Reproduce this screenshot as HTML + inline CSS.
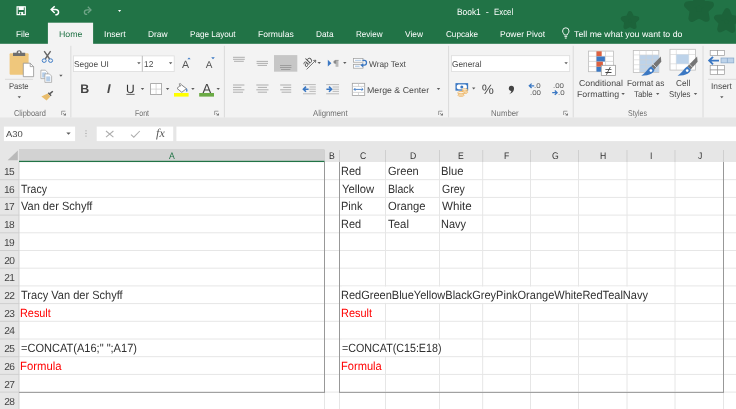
<!DOCTYPE html>
<html><head><meta charset="utf-8"><title>Book1 - Excel</title>
<style>
html,body{margin:0;padding:0;}
body{width:736px;height:409px;overflow:hidden;position:relative;background:#e6e6e6;font-family:'Liberation Sans',sans-serif;}
.t{position:absolute;white-space:pre;text-rendering:geometricPrecision;}
#top{position:absolute;left:0;top:0;width:736px;height:43px;background:#217346;}
#hometab{position:absolute;left:48.3px;top:23px;width:45px;height:22px;background:#f3f3f3;}
#ribbon{position:absolute;left:0;top:43px;width:736px;height:75px;background:#f3f3f3;}
#fbar{position:absolute;left:0;top:118px;width:736px;height:31px;background:#e6e6e6;}
.box{position:absolute;background:#fff;}
svg{position:absolute;left:0;top:0;}
#txt{position:absolute;left:0;top:0;width:736px;height:409px;will-change:transform;}
</style></head><body>
<div id="ribbon"></div><div id="top"></div><div id="fbar"></div>
<svg width="736" height="409" viewBox="0 0 736 409">
<rect x="0" y="162.0" width="736" height="247.0" fill="#fff"/>
<rect x="0" y="42" width="736" height="1.8" fill="#217346"/><rect x="47.9" y="22.7" width="45.2" height="21.6" fill="#f3f3f3"/>
<rect x="0" y="117.5" width="736" height="2" fill="#e6e6e6"/>
<rect x="3.9" y="126.6" width="71.2" height="14.5" fill="#fff"/>
<rect x="96.7" y="126.6" width="76.5" height="14.5" fill="#fff"/>
<rect x="176.4" y="126.6" width="560" height="14.5" fill="#fff"/>
<rect x="0" y="162.0" width="19" height="247.0" fill="#e6e6e6"/>
<line x1="19" x2="736" y1="179.70" y2="179.70" stroke="#e6e6e6" stroke-width="1"/>
<line x1="0" x2="19" y1="179.70" y2="179.70" stroke="#cfcfcf" stroke-width="1"/>
<line x1="19" x2="736" y1="197.40" y2="197.40" stroke="#e6e6e6" stroke-width="1"/>
<line x1="0" x2="19" y1="197.40" y2="197.40" stroke="#cfcfcf" stroke-width="1"/>
<line x1="19" x2="736" y1="215.10" y2="215.10" stroke="#e6e6e6" stroke-width="1"/>
<line x1="0" x2="19" y1="215.10" y2="215.10" stroke="#cfcfcf" stroke-width="1"/>
<line x1="19" x2="736" y1="232.80" y2="232.80" stroke="#e6e6e6" stroke-width="1"/>
<line x1="0" x2="19" y1="232.80" y2="232.80" stroke="#cfcfcf" stroke-width="1"/>
<line x1="19" x2="736" y1="250.50" y2="250.50" stroke="#e6e6e6" stroke-width="1"/>
<line x1="0" x2="19" y1="250.50" y2="250.50" stroke="#cfcfcf" stroke-width="1"/>
<line x1="19" x2="736" y1="268.20" y2="268.20" stroke="#e6e6e6" stroke-width="1"/>
<line x1="0" x2="19" y1="268.20" y2="268.20" stroke="#cfcfcf" stroke-width="1"/>
<line x1="19" x2="736" y1="285.90" y2="285.90" stroke="#e6e6e6" stroke-width="1"/>
<line x1="0" x2="19" y1="285.90" y2="285.90" stroke="#cfcfcf" stroke-width="1"/>
<line x1="19" x2="736" y1="303.60" y2="303.60" stroke="#e6e6e6" stroke-width="1"/>
<line x1="0" x2="19" y1="303.60" y2="303.60" stroke="#cfcfcf" stroke-width="1"/>
<line x1="19" x2="736" y1="321.30" y2="321.30" stroke="#e6e6e6" stroke-width="1"/>
<line x1="0" x2="19" y1="321.30" y2="321.30" stroke="#cfcfcf" stroke-width="1"/>
<line x1="19" x2="736" y1="339.00" y2="339.00" stroke="#e6e6e6" stroke-width="1"/>
<line x1="0" x2="19" y1="339.00" y2="339.00" stroke="#cfcfcf" stroke-width="1"/>
<line x1="19" x2="736" y1="356.70" y2="356.70" stroke="#e6e6e6" stroke-width="1"/>
<line x1="0" x2="19" y1="356.70" y2="356.70" stroke="#cfcfcf" stroke-width="1"/>
<line x1="19" x2="736" y1="374.40" y2="374.40" stroke="#e6e6e6" stroke-width="1"/>
<line x1="0" x2="19" y1="374.40" y2="374.40" stroke="#cfcfcf" stroke-width="1"/>
<line x1="19" x2="736" y1="392.10" y2="392.10" stroke="#e6e6e6" stroke-width="1"/>
<line x1="0" x2="19" y1="392.10" y2="392.10" stroke="#cfcfcf" stroke-width="1"/>
<line x1="19" x2="736" y1="409.80" y2="409.80" stroke="#e6e6e6" stroke-width="1"/>
<line x1="0" x2="19" y1="409.80" y2="409.80" stroke="#cfcfcf" stroke-width="1"/>
<line x1="324.5" x2="324.5" y1="162.0" y2="409" stroke="#e6e6e6" stroke-width="1"/>
<line x1="324.5" x2="324.5" y1="150" y2="162.0" stroke="#cfcfcf" stroke-width="1"/>
<line x1="339.5" x2="339.5" y1="162.0" y2="409" stroke="#e6e6e6" stroke-width="1"/>
<line x1="339.5" x2="339.5" y1="150" y2="162.0" stroke="#cfcfcf" stroke-width="1"/>
<line x1="385.5" x2="385.5" y1="162.0" y2="409" stroke="#e6e6e6" stroke-width="1"/>
<line x1="385.5" x2="385.5" y1="150" y2="162.0" stroke="#cfcfcf" stroke-width="1"/>
<line x1="439.5" x2="439.5" y1="162.0" y2="409" stroke="#e6e6e6" stroke-width="1"/>
<line x1="439.5" x2="439.5" y1="150" y2="162.0" stroke="#cfcfcf" stroke-width="1"/>
<line x1="482.7" x2="482.7" y1="162.0" y2="409" stroke="#e6e6e6" stroke-width="1"/>
<line x1="482.7" x2="482.7" y1="150" y2="162.0" stroke="#cfcfcf" stroke-width="1"/>
<line x1="530.5" x2="530.5" y1="162.0" y2="409" stroke="#e6e6e6" stroke-width="1"/>
<line x1="530.5" x2="530.5" y1="150" y2="162.0" stroke="#cfcfcf" stroke-width="1"/>
<line x1="578.5" x2="578.5" y1="162.0" y2="409" stroke="#e6e6e6" stroke-width="1"/>
<line x1="578.5" x2="578.5" y1="150" y2="162.0" stroke="#cfcfcf" stroke-width="1"/>
<line x1="627" x2="627" y1="162.0" y2="409" stroke="#e6e6e6" stroke-width="1"/>
<line x1="627" x2="627" y1="150" y2="162.0" stroke="#cfcfcf" stroke-width="1"/>
<line x1="675" x2="675" y1="162.0" y2="409" stroke="#e6e6e6" stroke-width="1"/>
<line x1="675" x2="675" y1="150" y2="162.0" stroke="#cfcfcf" stroke-width="1"/>
<line x1="723.5" x2="723.5" y1="162.0" y2="409" stroke="#e6e6e6" stroke-width="1"/>
<line x1="723.5" x2="723.5" y1="150" y2="162.0" stroke="#cfcfcf" stroke-width="1"/>
<rect x="342" y="286.60" width="332" height="16.30" fill="#fff"/>
<rect x="342" y="339.70" width="139.5" height="16.30" fill="#fff"/>
<line x1="19" x2="19" y1="162.0" y2="409" stroke="#cfcfcf" stroke-width="1"/>
<line x1="324.5" x2="324.5" y1="162.0" y2="392.40000000000003" stroke="#989898" stroke-width="1"/>
<line x1="19" x2="325" y1="392.40000000000003" y2="392.40000000000003" stroke="#989898" stroke-width="1"/>
<line x1="339.5" x2="339.5" y1="162.0" y2="392.40000000000003" stroke="#989898" stroke-width="1"/>
<line x1="723.5" x2="723.5" y1="162.0" y2="392.40000000000003" stroke="#989898" stroke-width="1"/>
<line x1="339" x2="724" y1="392.40000000000003" y2="392.40000000000003" stroke="#989898" stroke-width="1"/>
<rect x="19" y="149" width="305.5" height="12" fill="#d2d2d2"/>
<rect x="19" y="160.8" width="305.5" height="1.25" fill="#217346"/>
<polygon points="17.8,150.4 17.8,160.3 7.6,160.3" fill="#b9b9b9"/>
<!-- decorative clovers -->
<g fill="#1c633a" stroke="#1c633a" stroke-linejoin="round">
<polygon points="630.0,13.4 632.1,17.9 637.0,18.5 633.4,21.9 634.3,26.8 630.0,24.4 625.7,26.8 626.6,21.9 623.0,18.5 627.9,17.9" stroke-width="4.6"/>
<polygon points="699.0,-3.4 702.5,3.7 710.4,4.9 704.7,10.5 706.1,18.3 699.0,14.6 691.9,18.3 693.3,10.5 687.6,4.9 695.5,3.7" stroke-width="7"/>
<polygon points="727.1,11.2 729.7,17.5 736.5,18.8 731.3,23.2 732.2,30.0 726.3,26.4 720.2,29.3 721.8,22.7 717.1,17.7 723.9,17.2" stroke-width="6"/>
</g>
<!-- title bar icons -->
<g fill="none" stroke="#fff" stroke-width="1.2">
<rect x="17.1" y="6.8" width="8.2" height="7.8"/>
</g>
<rect x="18.6" y="6.8" width="5.2" height="3.2" fill="#fff"/>
<rect x="19.2" y="12" width="4" height="2.6" fill="#fff"/>
<rect x="20" y="12.6" width="1.2" height="2" fill="#217346"/>
<path d="M54.7,6.2 L51.2,9.6 L54.7,13" fill="none" stroke="#fff" stroke-width="1.5"/>
<path d="M51.5,9.6 H55.5 C59.6,9.6 59.6,14.8 55.3,14.8" fill="none" stroke="#fff" stroke-width="1.5"/>
<g opacity="0.35"><path d="M87.8,6.8 L91,9.9 L87.8,13" fill="none" stroke="#fff" stroke-width="1.3"/>
<path d="M90.6,9.9 H87.2 C83.4,9.9 83.4,14.4 87.2,14.4" fill="none" stroke="#fff" stroke-width="1.3"/></g>
<polygon points="118,10 121.2,10 119.6,11.9" fill="#fff"/>
<!-- light bulb -->
<g fill="none" stroke="#fff" stroke-width="0.9">
<path d="M564.3,35 C564.3,33.6 562.6,33 562.6,31 A3.2,3.2 0 0 1 569,31 C569,33 567.3,33.6 567.3,35 Z"/>
<line x1="564.4" x2="567.2" y1="36.6" y2="36.6"/><line x1="564.9" x2="566.7" y1="38.1" y2="38.1"/>
</g>

<!-- group separators -->
<g stroke="#dadada" stroke-width="1">
<line x1="70.9" x2="70.9" y1="45.8" y2="117.4"/><line x1="224.4" x2="224.4" y1="45.8" y2="117.4"/><line x1="448.6" x2="448.6" y1="45.8" y2="117.4"/><line x1="573.2" x2="573.2" y1="45.8" y2="117.4"/><line x1="703" x2="703" y1="45.8" y2="117.4"/>
<line x1="5" x2="33" y1="79.3" y2="79.3"/><line x1="708" x2="736" y1="79.3" y2="79.3"/>
</g>
<!-- dialog launchers -->
<g fill="none" stroke="#8a8a8a" stroke-width="0.8">
<path d="M61.6,115 V111.2 H65.4"/><path d="M214.6,115 V111.2 H218.4"/><path d="M438.6,115 V111.2 H442.4"/><path d="M563.6,115 V111.2 H567.4"/>
</g>
<g fill="#777">
<path d="M66,115.6 H63.4 L66,113 Z M63.3,112.9 l2,2 l-.5,.5 l-2,-2z"/>
<path d="M219,115.6 H216.4 L219,113 Z M216.3,112.9 l2,2 l-.5,.5 l-2,-2z"/>
<path d="M443,115.6 H440.4 L443,113 Z M440.3,112.9 l2,2 l-.5,.5 l-2,-2z"/>
<path d="M568,115.6 H565.4 L568,113 Z M565.3,112.9 l2,2 l-.5,.5 l-2,-2z"/>
</g>
<!-- font boxes -->
<rect x="73.4" y="55.9" width="100.8" height="15.7" fill="#fff" stroke="#dcdcdc" stroke-width="0.8"/>
<line x1="142.3" x2="142.3" y1="55.9" y2="71.6" stroke="#b5b5b5" stroke-width="0.9"/>
<rect x="451.4" y="55.7" width="118.3" height="15.7" fill="#fff" stroke="#dcdcdc" stroke-width="0.8"/>
<!-- carets -->
<g fill="#5c5c5c">
<polygon points="17.6,96.2 21.0,96.2 19.3,98.2"/>
<polygon points="59.2,74.8 62.6,74.8 60.9,76.8"/>
<polygon points="137.2,62.2 140.6,62.2 138.9,64.2"/>
<polygon points="168.9,62.2 172.3,62.2 170.6,64.2"/>
<polygon points="140.8,87.9 144.2,87.9 142.5,89.9"/>
<polygon points="165.9,87.9 169.3,87.9 167.6,89.9"/>
<polygon points="191.2,87.9 194.6,87.9 192.9,89.9"/>
<polygon points="216.5,87.9 219.9,87.9 218.2,89.9"/>
<polygon points="317.5,62.0 320.9,62.0 319.2,64.0"/>
<polygon points="343.1,62.0 346.5,62.0 344.8,64.0"/>
<polygon points="436.8,87.9 440.2,87.9 438.5,89.9"/>
<polygon points="564.4,62.2 567.8,62.2 566.1,64.2"/>
<polygon points="472.0,87.5 475.4,87.5 473.7,89.5"/>
<polygon points="621.4,92.9 624.8,92.9 623.1,94.9"/>
<polygon points="656.0,92.9 659.4,92.9 657.7,94.9"/>
<polygon points="693.8,92.9 697.2,92.9 695.5,94.9"/>
<polygon points="720.1,96.2 723.5,96.2 721.8,98.2"/>
<polygon points="66.3,132.4 70.7,132.4 68.5,134.8"/>
</g>
<!-- Paste icon -->
<rect x="9.6" y="53.2" width="19" height="21.6" rx="1" fill="#efc77c"/>
<path d="M13,55.9 V52.7 H16.6 V52.4 C16.6,49.4 21.7,49.4 21.7,52.4 V52.7 H25.2 V55.9 Z" fill="#6e6e6e"/>
<circle cx="19.15" cy="52.3" r="1" fill="#f3f3f3"/>
<path d="M23.3,63.2 H30.2 L33.6,66.6 V76.7 H23.3 Z" fill="#fff" stroke="#8f8f8f" stroke-width="0.75"/>
<path d="M30.2,63.2 V66.6 H33.6" fill="none" stroke="#8f8f8f" stroke-width="0.75"/>
<!-- scissors -->
<g fill="none">
<path d="M44.2,51.2 L49.6,59 M50.6,51.2 L45.2,59" stroke="#666" stroke-width="1.4"/>
<ellipse cx="44.2" cy="60.6" rx="2" ry="1.8" stroke="#3f7cc6" stroke-width="1"/>
<ellipse cx="50.6" cy="60.6" rx="2" ry="1.8" stroke="#3f7cc6" stroke-width="1"/>
</g>
<!-- copy -->
<path d="M40.9,70.2 H45.4 L47.6,72.4 V78.6 H40.9 Z" fill="#fff" stroke="#a2a2a2" stroke-width="0.75"/>
<rect x="42.2" y="72.4" width="4" height="5.2" fill="#b4cde8"/>
<path d="M44.9,73.9 H49.4 L51.6,76.1 V82.4 H44.9 Z" fill="#fff" stroke="#a2a2a2" stroke-width="0.75"/>
<rect x="46.2" y="76.4" width="4.1" height="5" fill="#b4cde8"/>
<!-- format painter -->
<path d="M41.4,96.4 L47.6,93.4 L50.4,96.4 L46.6,100.6 Z" fill="#e9bd6c"/>
<path d="M47.8,93.2 L50.6,96.2 L51.6,95.2 L48.8,92.2 Z" fill="#555"/>
<path d="M50,93.6 L52.8,91.2" stroke="#555" stroke-width="1.5" fill="none"/>
<!-- grow/shrink triangles -->
<polygon points="187.4,59.3 190.6,59.3 189,57.5" fill="#3b78c3"/>
<polygon points="211.2,57.3 214.8,57.3 213,59.2" fill="#3b78c3"/>
<!-- U underline -->
<line x1="126.4" x2="134.6" y1="94.4" y2="94.4" stroke="#555" stroke-width="0.9"/>
<!-- borders icon -->
<rect x="150.6" y="83.6" width="11" height="11" fill="#fff" stroke="#9c9c9c" stroke-width="0.8"/>
<path d="M156.1,84 V94.2 M151,89.1 H161.2" stroke="#cfcfcf" stroke-width="0.8" fill="none"/>
<!-- fill bucket -->
<path d="M181.2,84.6 L186.4,88.6 L181.8,92.3 L177,88.4 Z" fill="#fff" stroke="#777" stroke-width="0.9"/>
<path d="M180.2,86.6 L179.2,83.8 L180.8,83.4" fill="none" stroke="#777" stroke-width="0.7"/>
<path d="M186.6,88 C187.8,89.6 187.8,91.4 186.8,92 C185.8,91.4 186,89.6 186.6,88 Z" fill="#3b78c3"/>
<rect x="174" y="93" width="14.6" height="3.6" fill="#ffff00"/>
<rect x="199.2" y="93" width="14.8" height="3.6" fill="#6aaa44"/>
<!-- align icons -->
<g stroke="#a6a6a6" stroke-width="0.9" fill="none">
<path d="M233,57.3 H244.8 M233,59.3 H244.8 M234,61.3 H243.8"/>
<path d="M256.6,61.4 H268 M256.6,63.4 H268 M257.6,65.4 H267"/>
<path d="M233,85 H244.4 M233,87.4 H241.4 M233,89.8 H244.4 M233,92.2 H243"/>
<path d="M256.3,85 H268.5 M257.8,87.4 H267 M256.3,89.8 H268.5 M257.8,92.2 H267"/>
<path d="M280.2,85 H291.2 M283.2,87.4 H291.2 M280.2,89.8 H291.2 M281.6,92.2 H291.2"/>
</g>
<rect x="274" y="55.1" width="23.3" height="16.6" fill="#c6c6c6"/>
<path d="M280,65.5 H291.4 M280,67.5 H291.4 M281,69.5 H290.4" stroke="#999" stroke-width="0.9" fill="none"/>
<!-- orientation -->
<path d="M306.6,69.4 L315.6,60.4 M315.8,60.2 L313.2,60.5 M315.8,60.2 L315.5,62.8" stroke="#555" stroke-width="0.8" fill="none"/>
<!-- RTL -->
<polygon points="327.8,59.8 327.8,66.6 331.4,63.2" fill="#3b78c3"/>
<path d="M336.2,60.4 V66.8 M337.8,60.4 V66.8 M338.6,60.4 H335.2" stroke="#8a8a8a" stroke-width="0.8" fill="none"/>
<path d="M336.2,60.2 H335.2 A1.8,1.8 0 0 0 335.2,63.8 H336.2 Z" fill="#8a8a8a"/>
<!-- wrap text icon -->
<rect x="353.6" y="58.6" width="9.4" height="3.6" fill="#fff" stroke="#9c9c9c" stroke-width="0.7"/>
<rect x="353.6" y="64.4" width="9.4" height="3.8" fill="#fff" stroke="#9c9c9c" stroke-width="0.7"/>
<rect x="355" y="59.8" width="6.4" height="1.1" fill="#b4cde8"/>
<rect x="355" y="65.6" width="4.6" height="1.3" fill="#b4cde8"/>
<path d="M362.4,60.4 H364.4 C367.2,60.4 367.2,65.2 364.4,65.2 H362.6" stroke="#3b78c3" stroke-width="1.3" fill="none"/>
<polygon points="360.4,65.2 363.2,63 363.2,67.4" fill="#3b78c3"/>
<!-- indent icons -->
<g stroke="#b3b3b3" stroke-width="0.9" fill="none">
<path d="M303,84.6 H315.8 M309.4,87 H315.8 M309.4,89.2 H315.8 M309.4,91.4 H315.8 M303,93.8 H315.8"/>
<path d="M326.2,84.6 H339 M332.6,87 H339 M332.6,89.2 H339 M332.6,91.4 H339 M326.2,93.8 H339"/>
</g>
<path d="M303.4,89.2 H308.6 M306,86.6 L303.4,89.2 L306,91.8" stroke="#3b78c3" stroke-width="1.6" fill="none"/>
<path d="M326.4,89.2 H331.4 M329,86.6 L331.6,89.2 L329,91.8" stroke="#3b78c3" stroke-width="1.6" fill="none"/>
<!-- merge icon -->
<rect x="352.3" y="83.3" width="12.4" height="12.2" fill="#fff" stroke="#9e9e9e" stroke-width="0.8"/>
<path d="M352.3,86.4 H364.7 M352.3,92.4 H364.7 M358.5,83.3 V86.4 M358.5,92.4 V95.5" stroke="#c4c4c4" stroke-width="0.7" fill="none"/>
<path d="M354,89.4 H363 M355.4,88 L354,89.4 L355.4,90.8 M361.6,88 L363,89.4 L361.6,90.8" stroke="#3b78c3" stroke-width="0.9" fill="none"/>
<!-- currency icon -->
<rect x="456.1" y="83.8" width="11.4" height="6.2" fill="#fff" stroke="#3b78c3" stroke-width="1.3"/>
<path d="M456.1,83.8 h2.6 l-2.6,2.4z M467.5,83.8 h-2.6 l2.6,2.4z M456.1,90 h2.6 l-2.6,-2.4z M467.5,90 h-2.6 l2.6,-2.4z" fill="#3b78c3"/>
<circle cx="461.8" cy="86.9" r="1.5" fill="#3b78c3"/>
<g fill="#fbf3e4" stroke="#e9a94d" stroke-width="0.7">
<ellipse cx="464.8" cy="92.4" rx="2.8" ry="1.1"/><ellipse cx="464.8" cy="91.1" rx="2.8" ry="1.1"/><ellipse cx="464.8" cy="89.8" rx="2.8" ry="1.1"/>
<ellipse cx="461" cy="95.2" rx="3.1" ry="1.2"/><ellipse cx="461" cy="93.9" rx="3.1" ry="1.2"/><ellipse cx="461" cy="92.6" rx="3.1" ry="1.2"/>
</g>
<!-- comma -->
<path d="M508.8,88.4 A2.6,2.6 0 1 1 514,88.3 C514.2,91.4 512,93.4 509,94.2 C510.6,93 511.3,91.9 511.3,90.9 C509.9,90.9 508.8,89.9 508.8,88.4 Z" fill="#444"/>
<!-- decimal arrows -->
<path d="M529.2,85.8 H534.2 M531.6,83.6 L529.3,85.8 L531.6,88" stroke="#3b78c3" stroke-width="1.3" fill="none"/>
<path d="M552.2,92.7 H557.2 M554.8,90.5 L557.1,92.7 L554.8,94.9" stroke="#3b78c3" stroke-width="1.3" fill="none"/>
<!-- conditional formatting icon -->
<rect x="588.6" y="51.1" width="25" height="20.6" fill="#fff" stroke="#bdbdbd" stroke-width="0.8"/>
<path d="M588.6,56.3 H613.6 M588.6,61.4 H613.6 M588.6,66.6 H613.6 M596.4,51.1 V71.7 M605.5,51.1 V71.7" stroke="#cfcfcf" stroke-width="0.7" fill="none"/>
<rect x="596.5" y="51.3" width="5.2" height="5" fill="#dc6141"/>
<rect x="596.5" y="56.5" width="8.4" height="5" fill="#3b78c3"/>
<rect x="596.5" y="61.7" width="6.4" height="5" fill="#dc6141"/>
<rect x="596.5" y="66.9" width="4.6" height="4.8" fill="#3b78c3"/>
<rect x="601.3" y="65.3" width="14.3" height="10.1" fill="#fff" stroke="#9a9a9a" stroke-width="0.8"/>
<!-- format as table icon -->
<rect x="633.3" y="50.5" width="25.5" height="21.9" fill="#fff" stroke="#bdbdbd" stroke-width="0.8"/>
<rect x="639.6" y="55" width="19.2" height="17" fill="#bdd3ea"/>
<path d="M633.3,54.9 H658.8 M633.3,59.8 H658.8 M633.3,64.7 H658.8 M633.3,69.2 H658.8 M639.6,50.5 V72.4 M646.1,50.5 V72.4 M652.4,50.5 V72.4" stroke="#d2d2d2" stroke-width="0.6" fill="none"/>
<g id="brush">
<polygon points="651.2,66.2 660.8,56.4 661.3,61.8 654.4,69.4" fill="#757575"/>
<path d="M652.6,63.6 L656.8,67.8" stroke="#f0f0f0" stroke-width="0.7"/>
<path d="M651.2,66.2 L654.4,69.4 C654.4,72.6 650.4,75.4 641.2,75.7 C646.2,72.8 647.4,68.4 651.2,66.2 Z" fill="#3b78c3"/>
<circle cx="650.9" cy="70.6" r="1.35" fill="#fff"/>
</g>
<!-- cell styles icon -->
<rect x="670" y="49.3" width="25.4" height="20.8" fill="#fff" stroke="#bdbdbd" stroke-width="0.8"/>
<path d="M670,54.5 H695.4 M670,63.8 H695.4 M676.3,49.3 V70.1 M688.7,49.3 V70.1" stroke="#d2d2d2" stroke-width="0.6" fill="none"/>
<rect x="676.3" y="54.5" width="12.4" height="9.3" fill="#bdd3ea"/>
<g transform="translate(36.3,0)">
<polygon points="651.2,66.2 660.8,56.4 661.3,61.8 654.4,69.4" fill="#757575"/>
<path d="M652.6,63.6 L656.8,67.8" stroke="#f0f0f0" stroke-width="0.7"/>
<path d="M651.2,66.2 L654.4,69.4 C654.4,72.6 650.4,75.4 641.2,75.7 C646.2,72.8 647.4,68.4 651.2,66.2 Z" fill="#3b78c3"/>
<circle cx="650.9" cy="70.6" r="1.35" fill="#fff"/>
</g>
<!-- insert icon -->
<g fill="#fff" stroke="#9a9a9a" stroke-width="0.7">
<rect x="710.2" y="50.6" width="7.2" height="5"/><rect x="717.4" y="50.6" width="7.2" height="5"/>
<rect x="710.2" y="65.6" width="7.2" height="4.4"/><rect x="717.4" y="65.6" width="7.2" height="4.4"/>
<rect x="710.2" y="70" width="7.2" height="4.4"/><rect x="717.4" y="70" width="7.2" height="4.4"/>
</g>
<rect x="721" y="58" width="12.8" height="4.9" fill="#bdd3ea" stroke="#86a6c8" stroke-width="0.7"/>
<line x1="727.4" x2="727.4" y1="58" y2="62.9" stroke="#86a6c8" stroke-width="0.7"/>
<path d="M709.4,60.6 H719 M713,56.8 L709.2,60.6 L713,64.4" stroke="#3b78c3" stroke-width="1.9" fill="none"/>
<!-- formula bar -->
<g fill="#9a9a9a"><circle cx="86" cy="130.8" r="0.6"/><circle cx="86" cy="133.4" r="0.6"/><circle cx="86" cy="136" r="0.6"/></g>
<path d="M106,131 L113.4,137.2 M113.4,131 L106,137.2" stroke="#adadad" stroke-width="1.05" fill="none"/>
<path d="M131,134.6 L133.8,137.2 L139.8,131" stroke="#adadad" stroke-width="1.05" fill="none"/>

</svg>
<div id="txt">
<span class="t" style="left:456.82px;top:6px;font-size:9.2px;line-height:12px;color:#fff;transform:scaleX(0.9120);transform-origin:0 0;">Book1</span>
<span class="t" style="left:485.68px;top:6px;font-size:9.2px;line-height:12px;color:#fff;">-</span>
<span class="t" style="left:493.96px;top:6px;font-size:9.2px;line-height:12px;color:#fff;transform:scaleX(0.8565);transform-origin:0 0;">Excel</span>
<span class="t" style="left:16.26px;top:28px;font-size:8.5px;line-height:12px;color:#fff;transform:scaleX(0.9840);transform-origin:0 0;">File</span>
<span class="t" style="left:58.72px;top:28px;font-size:8.5px;line-height:12px;color:#217346;transform:scaleX(1.0372);transform-origin:0 0;">Home</span>
<span class="t" style="left:104.24px;top:28px;font-size:8.5px;line-height:12px;color:#fff;transform:scaleX(1.0146);transform-origin:0 0;">Insert</span>
<span class="t" style="left:148.26px;top:28px;font-size:8.5px;line-height:12px;color:#fff;transform:scaleX(0.9895);transform-origin:0 0;">Draw</span>
<span class="t" style="left:190.29px;top:28px;font-size:8.5px;line-height:12px;color:#fff;transform:scaleX(0.9532);transform-origin:0 0;">Page Layout</span>
<span class="t" style="left:258.24px;top:28px;font-size:8.5px;line-height:12px;color:#fff;transform:scaleX(1.0087);transform-origin:0 0;">Formulas</span>
<span class="t" style="left:315.77px;top:28px;font-size:8.5px;line-height:12px;color:#fff;transform:scaleX(0.9739);transform-origin:0 0;">Data</span>
<span class="t" style="left:355.69px;top:28px;font-size:8.5px;line-height:12px;color:#fff;transform:scaleX(0.9505);transform-origin:0 0;">Review</span>
<span class="t" style="left:405.05px;top:28px;font-size:8.5px;line-height:12px;color:#fff;transform:scaleX(0.9833);transform-origin:0 0;">View</span>
<span class="t" style="left:446.02px;top:28px;font-size:8.5px;line-height:12px;color:#fff;transform:scaleX(0.9557);transform-origin:0 0;">Cupcake</span>
<span class="t" style="left:500.25px;top:28px;font-size:8.5px;line-height:12px;color:#fff;transform:scaleX(0.9955);transform-origin:0 0;">Power Pivot</span>
<span class="t" style="left:573.74px;top:28px;font-size:8.5px;line-height:12px;color:#fff;transform:scaleX(1.0341);transform-origin:0 0;">Tell me what you want to do</span>
<span class="t" style="left:9.13px;top:80px;font-size:8.5px;line-height:12px;color:#484848;transform:scaleX(0.8976);transform-origin:0 0;">Paste</span>
<span class="t" style="left:13.76px;top:107px;font-size:8.5px;line-height:12px;color:#6e6e6e;transform:scaleX(0.8738);transform-origin:0 0;">Clipboard</span>
<span class="t" style="left:74.31px;top:58px;font-size:8.5px;line-height:12px;color:#484848;transform:scaleX(0.9810);transform-origin:0 0;">Segoe UI</span>
<span class="t" style="left:143.95px;top:58px;font-size:8.5px;line-height:12px;color:#484848;transform:scaleX(0.9939);transform-origin:0 0;">12</span>
<span class="t" style="left:134.98px;top:107px;font-size:8.5px;line-height:12px;color:#6e6e6e;transform:scaleX(0.8246);transform-origin:0 0;">Font</span>
<span class="t" style="left:368.60px;top:58px;font-size:8.5px;line-height:12px;color:#484848;transform:scaleX(0.9711);transform-origin:0 0;">Wrap Text</span>
<span class="t" style="left:366.62px;top:84px;font-size:8.5px;line-height:12px;color:#484848;transform:scaleX(1.0346);transform-origin:0 0;">Merge &amp; Center</span>
<span class="t" style="left:313.00px;top:107px;font-size:8.5px;line-height:12px;color:#6e6e6e;transform:scaleX(0.9139);transform-origin:0 0;">Alignment</span>
<span class="t" style="left:451.91px;top:58px;font-size:8.5px;line-height:12px;color:#484848;transform:scaleX(0.9744);transform-origin:0 0;">General</span>
<span class="t" style="left:491.02px;top:107px;font-size:8.5px;line-height:12px;color:#6e6e6e;transform:scaleX(0.9128);transform-origin:0 0;">Number</span>
<span class="t" style="left:578.78px;top:77px;font-size:8.5px;line-height:12px;color:#484848;transform:scaleX(1.0313);transform-origin:0 0;">Conditional</span>
<span class="t" style="left:577.02px;top:88px;font-size:8.5px;line-height:12px;color:#484848;transform:scaleX(1.0344);transform-origin:0 0;">Formatting</span>
<span class="t" style="left:627.27px;top:77px;font-size:8.5px;line-height:12px;color:#484848;transform:scaleX(0.9745);transform-origin:0 0;">Format as</span>
<span class="t" style="left:634.07px;top:88px;font-size:8.5px;line-height:12px;color:#484848;transform:scaleX(0.9215);transform-origin:0 0;">Table</span>
<span class="t" style="left:675.81px;top:77px;font-size:8.5px;line-height:12px;color:#484848;transform:scaleX(0.9704);transform-origin:0 0;">Cell</span>
<span class="t" style="left:668.93px;top:88px;font-size:8.5px;line-height:12px;color:#484848;transform:scaleX(0.9303);transform-origin:0 0;">Styles</span>
<span class="t" style="left:628.32px;top:107px;font-size:8.5px;line-height:12px;color:#6e6e6e;transform:scaleX(0.8200);transform-origin:0 0;">Styles</span>
<span class="t" style="left:710.86px;top:80px;font-size:8.5px;line-height:12px;color:#484848;transform:scaleX(0.9854);transform-origin:0 0;">Insert</span>
<span class="t" style="left:80.17px;top:81px;font-size:12.4px;line-height:16px;color:#444;font-weight:bold;">B</span>
<span class="t" style="left:106.90px;top:80px;font-size:12.8px;line-height:17px;color:#4a4a4a;font-weight:bold;font-style:italic;">I</span>
<span class="t" style="left:126.03px;top:81px;font-size:12px;line-height:16px;color:#333;">U</span>
<span class="t" style="left:481.80px;top:81px;font-size:13.6px;line-height:17px;color:#4a4a4a;">%</span>
<span class="t" style="left:181.90px;top:58px;font-size:10.6px;line-height:14px;color:#555;">A</span>
<span class="t" style="left:205.82px;top:59px;font-size:10px;line-height:13px;color:#555;">A</span>
<span class="t" style="left:202.50px;top:80px;font-size:13px;line-height:17px;color:#444;">A</span>
<span class="t" style="left:605.00px;top:63px;font-size:12.5px;line-height:16px;color:#444;">≠</span>
<span class="t" style="left:534.35px;top:82px;font-size:6.9px;line-height:9px;color:#5a5a5a;transform:scaleX(1.1500);transform-origin:0 0;">.0</span>
<span class="t" style="left:529.79px;top:89px;font-size:6.9px;line-height:9px;color:#5a5a5a;transform:scaleX(1.1500);transform-origin:0 0;">.00</span>
<span class="t" style="left:553.24px;top:82px;font-size:6.9px;line-height:9px;color:#5a5a5a;transform:scaleX(1.1500);transform-origin:0 0;">.00</span>
<span class="t" style="left:557.65px;top:89px;font-size:6.9px;line-height:9px;color:#5a5a5a;transform:scaleX(1.1500);transform-origin:0 0;">.0</span>
<span class="t" style="left:5.90px;top:128px;font-size:8.6px;line-height:12px;color:#444;transform:scaleX(1.0933);transform-origin:0 0;">A30</span>
<span class="t" style="left:156.12px;top:125px;font-family:'Liberation Serif',serif;font-size:12px;line-height:16px;color:#555;font-style:italic;">fx</span>
<span class="t" style="left:169.24px;top:150px;font-size:9.6px;line-height:13px;color:#217346;transform:scaleX(0.9);transform-origin:0 0;">A</span>
<span class="t" style="left:329.26px;top:150px;font-size:9.6px;line-height:13px;color:#333;transform:scaleX(0.9);transform-origin:0 0;">B</span>
<span class="t" style="left:359.65px;top:150px;font-size:9.6px;line-height:13px;color:#333;transform:scaleX(0.9);transform-origin:0 0;">C</span>
<span class="t" style="left:409.54px;top:150px;font-size:9.6px;line-height:13px;color:#333;transform:scaleX(0.9);transform-origin:0 0;">D</span>
<span class="t" style="left:458.36px;top:150px;font-size:9.6px;line-height:13px;color:#333;transform:scaleX(0.9);transform-origin:0 0;">E</span>
<span class="t" style="left:504.09px;top:150px;font-size:9.6px;line-height:13px;color:#333;transform:scaleX(0.9);transform-origin:0 0;">F</span>
<span class="t" style="left:551.54px;top:150px;font-size:9.6px;line-height:13px;color:#333;transform:scaleX(0.9);transform-origin:0 0;">G</span>
<span class="t" style="left:599.90px;top:150px;font-size:9.6px;line-height:13px;color:#333;transform:scaleX(0.9);transform-origin:0 0;">H</span>
<span class="t" style="left:650.06px;top:150px;font-size:9.6px;line-height:13px;color:#333;transform:scaleX(0.9);transform-origin:0 0;">I</span>
<span class="t" style="left:697.64px;top:150px;font-size:9.6px;line-height:13px;color:#333;transform:scaleX(0.9);transform-origin:0 0;">J</span>
<span class="t" style="left:4.07px;top:166px;font-size:10.2px;line-height:13px;color:#444;letter-spacing:-0.700px;">15</span>
<span class="t" style="left:4.07px;top:184px;font-size:10.2px;line-height:13px;color:#444;letter-spacing:-0.700px;">16</span>
<span class="t" style="left:4.07px;top:201px;font-size:10.2px;line-height:13px;color:#444;letter-spacing:-0.700px;">17</span>
<span class="t" style="left:4.07px;top:219px;font-size:10.2px;line-height:13px;color:#444;letter-spacing:-0.700px;">18</span>
<span class="t" style="left:4.07px;top:237px;font-size:10.2px;line-height:13px;color:#444;letter-spacing:-0.700px;">19</span>
<span class="t" style="left:4.20px;top:255px;font-size:10.2px;line-height:13px;color:#444;letter-spacing:-0.700px;">20</span>
<span class="t" style="left:4.20px;top:272px;font-size:10.2px;line-height:13px;color:#444;letter-spacing:-0.700px;">21</span>
<span class="t" style="left:4.20px;top:290px;font-size:10.2px;line-height:13px;color:#444;letter-spacing:-0.700px;">22</span>
<span class="t" style="left:4.20px;top:308px;font-size:10.2px;line-height:13px;color:#444;letter-spacing:-0.700px;">23</span>
<span class="t" style="left:4.20px;top:325px;font-size:10.2px;line-height:13px;color:#444;letter-spacing:-0.700px;">24</span>
<span class="t" style="left:4.20px;top:343px;font-size:10.2px;line-height:13px;color:#444;letter-spacing:-0.700px;">25</span>
<span class="t" style="left:4.20px;top:361px;font-size:10.2px;line-height:13px;color:#444;letter-spacing:-0.700px;">26</span>
<span class="t" style="left:4.20px;top:379px;font-size:10.2px;line-height:13px;color:#444;letter-spacing:-0.700px;">27</span>
<span class="t" style="left:4.20px;top:396px;font-size:10.2px;line-height:13px;color:#444;letter-spacing:-0.700px;">28</span>
<span class="t" style="left:21.08px;top:181px;font-size:11.9px;line-height:16px;color:#303030;transform:scaleX(0.8862);transform-origin:0 0;">Tracy</span>
<span class="t" style="left:21.07px;top:198px;font-size:11.9px;line-height:16px;color:#303030;transform:scaleX(0.9277);transform-origin:0 0;">Van der Schyff</span>
<span class="t" style="left:21.07px;top:287px;font-size:11.9px;line-height:16px;color:#303030;transform:scaleX(0.9281);transform-origin:0 0;">Tracy Van der Schyff</span>
<span class="t" style="left:20.39px;top:305px;font-size:11.9px;line-height:16px;color:#ff0000;transform:scaleX(0.9138);transform-origin:0 0;">Result</span>
<span class="t" style="left:20.84px;top:340px;font-size:11.9px;line-height:16px;color:#303030;transform:scaleX(0.9287);transform-origin:0 0;">=CONCAT(A16;" ";A17)</span>
<span class="t" style="left:20.35px;top:358px;font-size:11.9px;line-height:16px;color:#ff0000;transform:scaleX(0.9520);transform-origin:0 0;">Formula</span>
<span class="t" style="left:341.18px;top:163px;font-size:11.9px;line-height:16px;color:#303030;transform:scaleX(0.9200);transform-origin:0 0;">Red</span>
<span class="t" style="left:387.94px;top:163px;font-size:11.9px;line-height:16px;color:#303030;transform:scaleX(0.9291);transform-origin:0 0;">Green</span>
<span class="t" style="left:441.46px;top:163px;font-size:11.9px;line-height:16px;color:#303030;transform:scaleX(0.9438);transform-origin:0 0;">Blue</span>
<span class="t" style="left:341.86px;top:181px;font-size:11.9px;line-height:16px;color:#303030;transform:scaleX(0.9481);transform-origin:0 0;">Yellow</span>
<span class="t" style="left:387.51px;top:181px;font-size:11.9px;line-height:16px;color:#303030;transform:scaleX(0.8929);transform-origin:0 0;">Black</span>
<span class="t" style="left:441.96px;top:181px;font-size:11.9px;line-height:16px;color:#303030;transform:scaleX(0.8871);transform-origin:0 0;">Grey</span>
<span class="t" style="left:341.17px;top:198px;font-size:11.9px;line-height:16px;color:#303030;transform:scaleX(0.9273);transform-origin:0 0;">Pink</span>
<span class="t" style="left:387.93px;top:198px;font-size:11.9px;line-height:16px;color:#303030;transform:scaleX(0.9445);transform-origin:0 0;">Orange</span>
<span class="t" style="left:442.20px;top:198px;font-size:11.9px;line-height:16px;color:#303030;transform:scaleX(0.9767);transform-origin:0 0;">White</span>
<span class="t" style="left:341.18px;top:216px;font-size:11.9px;line-height:16px;color:#303030;transform:scaleX(0.9200);transform-origin:0 0;">Red</span>
<span class="t" style="left:388.16px;top:216px;font-size:11.9px;line-height:16px;color:#303030;transform:scaleX(0.9590);transform-origin:0 0;">Teal</span>
<span class="t" style="left:441.48px;top:216px;font-size:11.9px;line-height:16px;color:#303030;transform:scaleX(0.9231);transform-origin:0 0;">Navy</span>
<span class="t" style="left:341.17px;top:287px;font-size:11.9px;line-height:16px;color:#303030;transform:scaleX(0.9263);transform-origin:0 0;">RedGreenBlueYellowBlackGreyPinkOrangeWhiteRedTealNavy</span>
<span class="t" style="left:341.18px;top:305px;font-size:11.9px;line-height:16px;color:#ff0000;transform:scaleX(0.9200);transform-origin:0 0;">Result</span>
<span class="t" style="left:341.65px;top:340px;font-size:11.9px;line-height:16px;color:#303030;transform:scaleX(0.9007);transform-origin:0 0;">=CONCAT(C15:E18)</span>
<span class="t" style="left:341.17px;top:358px;font-size:11.9px;line-height:16px;color:#ff0000;transform:scaleX(0.9333);transform-origin:0 0;">Formula</span>
<span class="t" style="left:302.4px;top:56.2px;font-size:9.4px;line-height:11px;color:#444;transform:rotate(-45deg);transform-origin:50% 50%;letter-spacing:-0.3px">ab</span>
</div>
</body></html>
